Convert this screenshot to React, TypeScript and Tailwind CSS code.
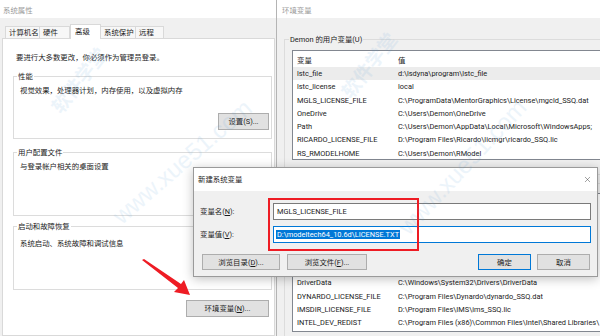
import { X } from "lucide-react";

/* ── Shared bits ─────────────────────────────────────────────────── */

const FONT = "font-['Roboto','Noto_Sans_CJK_SC',sans-serif] text-[7.4px] leading-[9px]";

function Key({ k }: { k: string }) {
  return <span className="underline underline-offset-1">{k}</span>;
}

function Button({ children, className = "" }: { children: React.ReactNode; className?: string }) {
  return (
    <div
      className={`flex items-center justify-center bg-[#e1e1e1] border border-[#adadad] text-[#1b1b1b] ${className}`}
    >
      {children}
    </div>
  );
}

const userVars: [string, string][] = [
  ["lstc_file", "d:\\lsdyna\\program\\lstc_file"],
  ["lstc_license", "local"],
  ["MGLS_LICENSE_FILE", "C:\\ProgramData\\MentorGraphics\\License\\mgcld_SSQ.dat"],
  ["OneDrive", "C:\\Users\\Demon\\OneDrive"],
  ["Path", "C:\\Users\\Demon\\AppData\\Local\\Microsoft\\WindowsApps;"],
  ["RICARDO_LICENSE_FILE", "D:\\Program Files\\Ricardo\\licmgr\\ricardo_SSQ.lic"],
  ["RS_RMODELHOME", "C:\\Users\\Demon\\RModel"],
];

const sysVars: [string, string][] = [
  ["ComSpec", "C:\\Windows\\system32\\cmd.exe"],
  ["DriverData", "C:\\Windows\\System32\\Drivers\\DriverData"],
  ["DYNARDO_LICENSE_FILE", "C:\\Program Files\\Dynardo\\dynardo_SSQ.dat"],
  ["IMSDIR_LICENSE_FILE", "D:\\Program Files\\IMS\\ims_SSQ.lic"],
  ["INTEL_DEV_REDIST", "C:\\Program Files (x86)\\Common Files\\Intel\\Shared Libraries\\"],
];

function VarRow({ name, value, selected = false }: { name: string; value: string; selected?: boolean }) {
  return (
    <div className={`flex items-center h-[13.3px] shrink-0 whitespace-nowrap ${selected ? "bg-[#ececec]" : ""}`}>
      <div className="w-[105px] pl-[4px] shrink-0">{name}</div>
      <div>{value}</div>
    </div>
  );
}

/* ── 系统属性 window ─────────────────────────────────────────────── */

function SystemProperties() {
  const tabs = [
    { label: "计算机名", w: "w-[35px]" },
    { label: "硬件", w: "w-[31px]" },
    { label: "高级", w: "w-[31px]", active: true },
    { label: "系统保护", w: "w-[36px]" },
    { label: "远程", w: "w-[29px]" },
  ];

  return (
    <div className="absolute left-0 top-0 w-[277px] h-[336px] flex flex-col">
      <div className="h-[18px] shrink-0 bg-white flex items-center pl-[3px] pt-[2px] text-[#9a9a9a]">系统属性</div>
      <div className="flex-1 min-h-0 overflow-hidden bg-[#f0f0f0] flex flex-col pl-[2px] pr-[2px]">
        {/* tabs */}
        <div className="h-[20px] shrink-0 flex items-end pl-[3px]">
          {tabs.map((t) =>
            t.active ? (
              <div
                key={t.label}
                className={`${t.w} h-[15px] -mb-px z-10 bg-white border border-b-0 border-[#d9d9d9] flex items-center pl-[4px] pb-[1px] text-[#1b1b1b]`}
              >
                {t.label}
              </div>
            ) : (
              <div
                key={t.label}
                className={`${t.w} h-[12px] bg-[#f7f7f7] border border-b-0 border-[#d9d9d9] flex items-center pl-[3px] text-[#1b1b1b] -ml-px first:ml-0`}
              >
                {t.label}
              </div>
            ),
          )}
        </div>

        {/* panel */}
        <div className="flex-1 min-h-0 overflow-hidden bg-white border border-[#d9d9d9] flex flex-col pl-[10px] pr-[2px] text-[#1b1b1b]">
          <p className="mt-[13.5px] ml-[3px] shrink-0">要进行大多数更改，你必须作为管理员登录。</p>

          <fieldset className="mt-[10px] h-[67.5px] shrink-0 border border-[#dcdcdc] flex flex-col">
            <legend className="ml-[3px] px-[1px]">性能</legend>
            <p className="mt-[5px] ml-[6px]">视觉效果，处理器计划，内存使用，以及虚拟内存</p>
            <div className="flex justify-end mt-[18.5px] pr-[2px]">
              <Button className="w-[51px] h-[17px]">设置(S)...</Button>
            </div>
          </fieldset>

          <fieldset className="mt-[8.5px] h-[68.5px] shrink-0 border border-[#dcdcdc] flex flex-col">
            <legend className="ml-[3px] px-[1px]">用户配置文件</legend>
            <p className="mt-[5px] ml-[6px]">与登录帐户相关的桌面设置</p>
          </fieldset>

          <fieldset className="mt-[5.5px] h-[68.5px] shrink-0 border border-[#dcdcdc] flex flex-col">
            <legend className="ml-[3px] px-[1px]">启动和故障恢复</legend>
            <p className="mt-[8px] ml-[6px]">系统启动、系统故障和调试信息</p>
          </fieldset>

          <div className="flex justify-end mt-[10px] pr-[3px] shrink-0">
            <Button className="w-[83px] h-[17px]">
              环境变量(<Key k="N" />)...
            </Button>
          </div>
        </div>
      </div>
    </div>
  );
}

/* ── 环境变量 window ─────────────────────────────────────────────── */

function EnvironmentVariables() {
  return (
    <div className="absolute left-[276px] top-0 w-[330px] h-[336px] flex flex-col border-l border-[#b4b4b4]">
      <div className="h-[18px] shrink-0 bg-white flex items-center pl-[5px] pt-[2px] text-[#9a9a9a]">环境变量</div>
      <div className="flex-1 min-h-0 overflow-hidden bg-[#f0f0f0] flex flex-col pl-[7px] text-[#1b1b1b]">
        <fieldset className="mt-[17px] shrink-0 border border-r-0 border-[#dcdcdc] flex flex-col">
          <legend className="ml-[4px] px-[1px]">Demon 的用户变量(U)</legend>
          <div className="mt-[6px] ml-[7px] h-[110px] bg-white border border-r-0 border-[#828790] flex flex-col pt-[2.5px] overflow-hidden">
            <VarRow name="变量" value="值" />
            {userVars.map(([n, v], i) => (
              <VarRow key={n} name={n} value={v} selected={i === 0} />
            ))}
          </div>
          <div className="h-[14px]" />
        </fieldset>

        <fieldset className="mt-[4px] flex-1 min-h-0 border border-r-0 border-b-0 border-[#dcdcdc] flex flex-col">
          <legend className="ml-[4px] px-[1px]">系统变量(S)</legend>
          <div className="mt-[5px] mb-[4px] ml-[7px] flex-1 min-h-0 bg-white border border-r-0 border-[#828790] flex flex-col justify-end pb-[1.5px] overflow-hidden">
            <VarRow name="变量" value="值" />
            {sysVars.map(([n, v]) => (
              <VarRow key={n} name={n} value={v} />
            ))}
          </div>
        </fieldset>
      </div>
    </div>
  );
}

/* ── 新建系统变量 dialog ─────────────────────────────────────────── */

function NewVariableDialog() {
  return (
    <div className="absolute left-[193px] top-[167px] w-[405px] h-[110px] border border-[#9a9a9a] shadow-[0_2px_10px_rgba(0,0,0,0.25)] flex flex-col text-[#1b1b1b]">
      <div className="h-[23px] shrink-0 bg-white flex items-center justify-between pl-[4px] pr-[5px]">
        <span>新建系统变量</span>
        <X size={9} strokeWidth={1.2} className="text-[#333]" />
      </div>
      <div className="flex-1 bg-[#f0f0f0] flex flex-col pl-[6px] pr-[6px]">
        <div className="mt-[12px] flex items-center">
          <div className="w-[73px]">
            变量名(<Key k="N" />):
          </div>
          <div className="flex-1 h-[17px] bg-white border border-[#7a7a7a] flex items-center pl-[3px]">
            MGLS_LICENSE_FILE
          </div>
        </div>
        <div className="mt-[6px] flex items-center">
          <div className="w-[73px]">
            变量值(<Key k="V" />):
          </div>
          <div className="flex-1 h-[17px] bg-white border border-[#0078d7] flex items-center pl-[2px]">
            <span className="bg-[#0078d7] text-white px-[1px]">D:\modeltech64_10.6d\LICENSE.TXT</span>
          </div>
        </div>
        <div className="mt-[11px] flex items-center pl-[2px]">
          <Button className="w-[78px] h-[16px]">
            浏览目录(<Key k="D" />)...
          </Button>
          <Button className="w-[80px] h-[16px] ml-[7px]">
            浏览文件(<Key k="F" />)...
          </Button>
          <div className="flex-1" />
          <Button className="w-[53px] h-[16px] !border-[#0078d7]">确定</Button>
          <Button className="w-[53px] h-[16px] ml-[6px] mr-[1px]">取消</Button>
        </div>
      </div>
    </div>
  );
}

/* ── Page ─────────────────────────────────────────────────────────── */

export default function App() {
  return (
    <div className={`relative w-[600px] h-[336px] overflow-hidden bg-white ${FONT}`}>
      <SystemProperties />
      <EnvironmentVariables />
      <NewVariableDialog />

      {/* red highlight box */}
      <div className="absolute left-[268px] top-[198px] w-[151px] h-[53px] border-2 border-[#ee1c24] pointer-events-none" />

      {/* red arrow */}
      <svg className="absolute left-0 top-0 pointer-events-none" width="600" height="336">
        <polygon points="142,260 144,259 181,284 184,280 190,295 174,292 178,288" fill="#ee1c24" />
      </svg>

      {/* watermark */}
      <div className="absolute left-[40px] top-[70px] -rotate-[52deg] text-[19px] leading-none font-['Noto_Sans_CJK_SC',sans-serif] font-bold text-[#4f9ad8] opacity-[0.1] pointer-events-none whitespace-nowrap">
        软件学堂
      </div>
      <div className="absolute left-[95px] top-[150px] -rotate-[41deg] text-[24px] leading-none font-['Liberation_Sans',sans-serif] text-[#4f9ad8] opacity-[0.1] pointer-events-none whitespace-nowrap">
        www.xue51.com
      </div>
      <div className="absolute left-[330px] top-[55px] -rotate-[52deg] text-[19px] leading-none font-['Noto_Sans_CJK_SC',sans-serif] font-bold text-[#4f9ad8] opacity-[0.1] pointer-events-none whitespace-nowrap">
        软件学堂
      </div>
      <div className="absolute left-[375px] top-[155px] -rotate-[47deg] text-[24px] leading-none font-['Liberation_Sans',sans-serif] text-[#4f9ad8] opacity-[0.1] pointer-events-none whitespace-nowrap">
        www.xue51.com
      </div>
    </div>
  );
}
